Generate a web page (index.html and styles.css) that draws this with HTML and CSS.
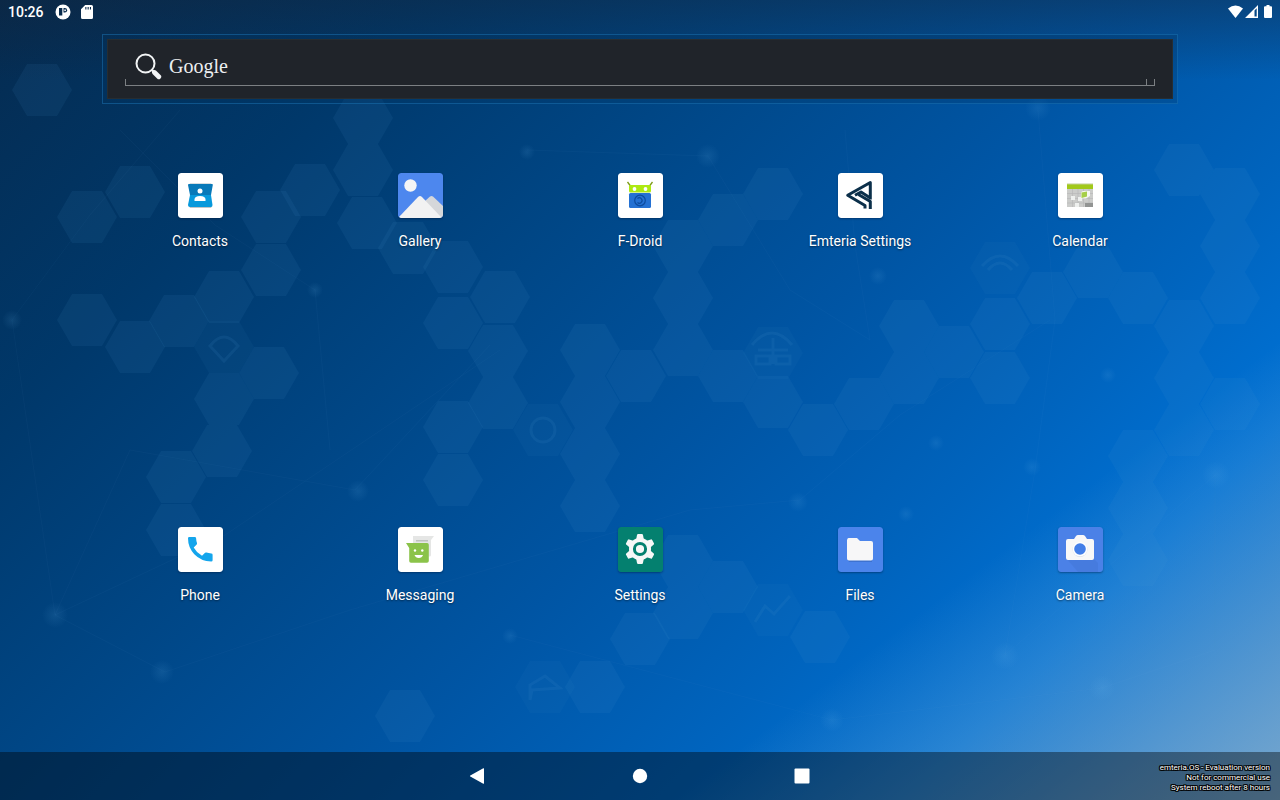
FILE: index.html
```html
<!DOCTYPE html>
<html lang="en">
<head>
<meta charset="utf-8">
<meta name="viewport" content="width=device-width, initial-scale=1">
<title>Home</title>
<link rel="stylesheet" href="styles.css">
</head>
<body>
<div class="screen">
  <svg class="wallpaper" viewBox="0 0 1280 800" preserveAspectRatio="xMidYMid slice" aria-hidden="true">
    <defs>
      <path id="hex" d="M-30 0 -15 -26H15L30 0 15 26H-15Z" stroke-linejoin="round"/>
      <radialGradient id="dot"><stop offset="0" stop-color="#6ab4e8" stop-opacity=".13"/><stop offset="1" stop-color="#6ab4e8" stop-opacity="0"/></radialGradient>
    </defs>
    <g fill="#4a96d0" fill-opacity=".09">
      <use href="#hex" x="42" y="90"/><use href="#hex" x="87" y="217"/><use href="#hex" x="135" y="192"/><use href="#hex" x="135" y="347"/>
      <use href="#hex" x="87" y="320"/><use href="#hex" x="179" y="321"/><use href="#hex" x="224" y="297"/><use href="#hex" x="271" y="270"/>
      <use href="#hex" x="271" y="217"/><use href="#hex" x="224" y="399"/><use href="#hex" x="269" y="373"/><use href="#hex" x="222" y="451"/>
      <use href="#hex" x="176" y="477"/><use href="#hex" x="176" y="530"/><use href="#hex" x="310" y="190"/><use href="#hex" x="363" y="118"/>
      <use href="#hex" x="363" y="170"/><use href="#hex" x="367" y="223"/><use href="#hex" x="408" y="248"/><use href="#hex" x="453" y="267"/>
      <use href="#hex" x="500" y="297"/><use href="#hex" x="453" y="323"/><use href="#hex" x="498" y="351"/><use href="#hex" x="498" y="403"/>
      <use href="#hex" x="453" y="427"/><use href="#hex" x="453" y="480"/><use href="#hex" x="590" y="350"/><use href="#hex" x="590" y="402"/>
      <use href="#hex" x="590" y="454"/><use href="#hex" x="590" y="506"/><use href="#hex" x="636" y="376"/><use href="#hex" x="683" y="246"/>
      <use href="#hex" x="683" y="298"/><use href="#hex" x="683" y="350"/><use href="#hex" x="728" y="376"/><use href="#hex" x="773" y="402"/>
      <use href="#hex" x="818" y="430"/><use href="#hex" x="864" y="404"/><use href="#hex" x="909" y="378"/><use href="#hex" x="909" y="326"/>
      <use href="#hex" x="954" y="352"/><use href="#hex" x="1000" y="378"/><use href="#hex" x="1000" y="324"/><use href="#hex" x="1047" y="298"/>
      <use href="#hex" x="1093" y="272"/><use href="#hex" x="1138" y="298"/><use href="#hex" x="1184" y="326"/><use href="#hex" x="1184" y="378"/>
      <use href="#hex" x="1230" y="246"/><use href="#hex" x="1230" y="298"/><use href="#hex" x="1184" y="170"/><use href="#hex" x="1230" y="194"/>
      <use href="#hex" x="1230" y="404"/><use href="#hex" x="1184" y="430"/><use href="#hex" x="1138" y="456"/><use href="#hex" x="1138" y="508"/>
      <use href="#hex" x="1138" y="560"/><use href="#hex" x="683" y="561"/><use href="#hex" x="683" y="613"/><use href="#hex" x="728" y="587"/>
      <use href="#hex" x="820" y="637"/><use href="#hex" x="640" y="639"/><use href="#hex" x="595" y="687"/><use href="#hex" x="405" y="716"/>
      <use href="#hex" x="773" y="194"/><use href="#hex" x="728" y="220"/>
    </g>
    <g fill="#4a96d0" fill-opacity=".06">
      <use href="#hex" x="773" y="353"/><use href="#hex" x="1000" y="268"/><use href="#hex" x="543" y="430"/>
      <use href="#hex" x="773" y="610"/><use href="#hex" x="545" y="687"/><use href="#hex" x="224" y="347"/>
    </g>
    <g fill="none" stroke="#4a96d0" stroke-opacity=".12" stroke-width="3">
      <path d="M752 345q20-24 40 0M756 356h14v8h-14zM776 356h14v8h-14zM773 338v26M758 350h30"/>
      <path d="M982 266q18-20 36 0M988 270q12-14 24 0"/>
      <circle cx="543" cy="430" r="12"/>
      <path d="M755 622 765 606 774 614 790 596"/>
      <path d="M530 700V685L545 676 560 688 532 690Z"/>
      <path d="M210 346q14-18 28 0l-14 15z"/>
    </g>
    <g fill="none" stroke="#73b5e6" stroke-opacity=".04">
      <path d="M12 320 55 615 130 450 355 490 490 345M12 320 90 215 180 110M55 615 225 535 500 350M55 615 165 672 350 610 690 510M527 150 708 156 790 290 870 340 855 245 845 130M690 510 800 500 900 415 1050 320M1005 655 1035 470 1055 320 1038 110M1005 655 1215 475 1215 650 1102 688 832 720 510 635M120 130 215 225 315 290 330 450"/>
    </g>
    <g fill="url(#dot)">
      <circle cx="12" cy="320" r="10"/><circle cx="55" cy="615" r="13"/><circle cx="358" cy="491" r="11"/><circle cx="162" cy="672" r="12"/><circle cx="315" cy="290" r="8"/><circle cx="527" cy="152" r="8"/><circle cx="708" cy="156" r="12"/><circle cx="1038" cy="108" r="13"/><circle cx="1108" cy="375" r="8"/><circle cx="1032" cy="467" r="9"/><circle cx="1216" cy="475" r="14"/><circle cx="1102" cy="688" r="13"/><circle cx="1005" cy="656" r="14"/><circle cx="832" cy="720" r="12"/><circle cx="936" cy="443" r="8"/><circle cx="906" cy="514" r="8"/><circle cx="798" cy="502" r="10"/><circle cx="878" cy="276" r="9"/><circle cx="510" cy="636" r="8"/>
    </g>
  </svg>

  <header class="status">
    <div class="status-group">
      <time class="clock">10:26</time>
      <svg class="status-app" viewBox="0 0 16 16" width="16" height="16" aria-hidden="true"><circle cx="8" cy="8" r="7.500" fill="#fff"/><path d="M4 4h3.300v7.500H4Z" fill="#082b4c"/><path d="M8.500 4h1.300a2.300 2.300 0 0 1 0 4.600H8.500Z" fill="#082b4c"/><rect x="9.300" y="5.500" width="1.600" height="1.600" fill="#fff"/></svg>
      <svg viewBox="0 0 12 14" width="12" height="14" aria-hidden="true"><path fill="#fff" fill-rule="evenodd" d="M4.2 0H10.5Q12 0 12 1.500V12.500Q12 14 10.500 14H1.500Q0 14 0 12.500V4.200ZM4.300 2V4.500H5.400V2ZM6.600 2V4.500H7.700V2ZM8.900 2V4.500H10V2Z"/></svg>
    </div>
    <div class="status-group status-right">
      <svg viewBox="0 0 15 13" width="15" height="13" role="img" aria-label="Wi-Fi"><path fill="#fff" d="M7.500 13 0 3.500Q7.500-2.500 15 3.500Z"/></svg>
      <svg class="signal" viewBox="0 0 13 13" width="13" height="13" role="img" aria-label="Signal"><path fill="#fff" fill-rule="evenodd" d="M0 13 13 0V13ZM9.500 5.500V11.500H11.700V3.200Z"/></svg>
      <svg viewBox="0 0 8 13" width="8" height="13" role="img" aria-label="Battery"><path fill="#fff" d="M2.500 0h3v1.300H7q1 0 1 1V12q0 1-1 1H1q-1 0-1-1V2.300q0-1 1-1h1.500Z"/></svg>
    </div>
  </header>

  <form class="search" role="search">
    <div class="search-box">
      <label class="search-field">
        <svg viewBox="0 0 28 28" width="28" height="28" role="img" aria-label="Search"><circle cx="11.500" cy="11.500" r="9" fill="none" stroke="#f2f4f5" stroke-width="2"/><path d="m17.500 17.500 3 3" stroke="#f2f4f5" stroke-width="2.400"/><path d="m20.500 20.500 4.300 4.300" stroke="#f2f4f5" stroke-width="4.800" stroke-linecap="round"/></svg>
        <input class="search-input" type="text" placeholder="Google">
      </label>
    </div>
  </form>

  <main class="apps">
    <a class="app" href="#contacts">
      <svg class="app-icon" viewBox="0 0 45 45" aria-hidden="true"><rect width="45" height="45" rx="3" fill="#fff"/><path d="M11 33h23l-1 2H12z" fill="#bfc5c8"/><path d="M12 10h21l1 2H11z" fill="#d5dde0"/><path d="M11 11h23q1 0 .8 1L33 22H12L10 12q0-1 1-1Z" fill="#0879b9"/><path d="M12 22h21l1.500 10q0 2-1.500 2H12q-2 0-2-2Z" fill="#0799dc"/><circle cx="22" cy="18" r="2.500" fill="#fff"/><path d="M16.500 28v-1.500q0-3.500 5.500-3.500t5.500 3.500V28Z" fill="#fff"/></svg>
      <span class="app-name">Contacts</span>
    </a>
    <a class="app" href="#gallery">
      <svg class="app-icon" viewBox="0 0 45 45" aria-hidden="true"><rect width="45" height="45" rx="3" fill="#4d87ee"/><circle cx="12.500" cy="12.500" r="6.200" fill="#f5f5f5"/><path d="m27 28 5-4.500q1.500-1 3 0L45 33v9q0 3-3 3h-4Z" fill="#d5d7da"/><path d="M1 44 20 24q2-2 4 0L43 44q-1 1-2 1H3q-1 0-2-1Z" fill="#f2f2f2"/></svg>
      <span class="app-name">Gallery</span>
    </a>
    <a class="app" href="#f-droid">
      <svg class="app-icon" viewBox="0 0 45 45" aria-hidden="true"><rect width="45" height="45" rx="3" fill="#fff"/><path d="m9.500 9 3 4M34.500 9l-3 4" stroke="#7d9b18" stroke-width="1.300"/><rect x="11" y="12" width="22" height="7.500" rx="1.500" fill="#aeea12"/><circle cx="16.500" cy="16" r="1.900" fill="#fff"/><circle cx="27.500" cy="16" r="1.900" fill="#fff"/><rect x="11" y="20" width="22" height="15" rx="1.500" fill="#2471d3"/><circle cx="22" cy="27.500" r="5.300" fill="none" stroke="#0d4c9f" stroke-width="1.200"/><path d="M19.500 25.500a2.700 2.700 0 1 1 0 4" fill="none" stroke="#0d4c9f" stroke-width="1.200"/></svg>
      <span class="app-name">F-Droid</span>
    </a>
    <a class="app" href="#emteria-settings">
      <svg class="app-icon" viewBox="0 0 45 45" aria-hidden="true"><rect width="45" height="45" rx="3" fill="#fff"/><g fill="none" stroke="#0b2f4a" stroke-width="3" stroke-linejoin="round"><path d="M32.300 26.500V9.500L9.700 22.300 27 32.500v3"/><path d="m32.300 36v-7.500L20.500 21.500"/><path d="m17 22.300 6-3.300 9.300 6"/></g></svg>
      <span class="app-name">Emteria Settings</span>
    </a>
    <a class="app" href="#calendar">
      <svg class="app-icon" viewBox="0 0 45 45" aria-hidden="true"><rect width="45" height="45" rx="3" fill="#fff"/><path d="M9 15h26v19H9Z" fill="#cbccca"/><path d="M9 11h26v5H9Z" fill="#a2c91a"/><path d="M9 10.500h26v1H9Z" fill="#c2cf96"/><path d="M9 20.500h26M9 25.500h26M9 30h26M14.500 16v18M20 16v18M25.500 16v18M31 16v18" stroke="#b6b6b6" stroke-width=".6"/><path d="M13 23h4v4h-4ZM20 24h4v4h-4ZM17 30h4v4h-4Z" fill="#eef0ee"/><path d="M23 20.500q0-2.500 2.500-2.500H32v5l-4 2.500h-5Z" fill="#f5f7f0"/><path d="M23.500 19.500 29 18.500v5l-5.500 1.500Z" fill="#a6cf48"/><path d="M27 30h8v4h-8Z" fill="#929493"/></svg>
      <span class="app-name">Calendar</span>
    </a>
    <a class="app" href="#phone">
      <svg class="app-icon" viewBox="0 0 45 45" aria-hidden="true"><rect width="45" height="45" rx="3" fill="#fff"/><path d="M11.300 10h5.500q1.200 0 1.300 1.200.1 2.500.9 4.700.3.900-.3 1.500l-3 3q2.700 5 8.300 8.400l2.800-2.900q.7-.6 1.600-.3 2.200.7 4.900.9 1.300.1 1.300 1.300v5.400q0 1.300-1.400 1.300Q23 34.200 16.300 27.200 10 20.500 10 11.300q0-1.300 1.300-1.300Z" fill="#14a5ec"/></svg>
      <span class="app-name">Phone</span>
    </a>
    <a class="app" href="#messaging">
      <svg class="app-icon" viewBox="0 0 45 45" aria-hidden="true"><rect width="45" height="45" rx="3" fill="#fff"/><path d="M15 9h21l-3 4v15q0 1.500-1.500 1.500H16.500Q15 29.500 15 28Z" fill="#e5e6e5"/><path d="M18 13h12v1.500H18ZM18 16.500h12v1.300H18Z" fill="#bfc2bf"/><path d="M8 16h21q1.800 0 1.800 1.800V34q0 1.800-1.800 1.800H13q-1.800 0-1.800-1.800V21Z" fill="#8bc34a"/><circle cx="17" cy="23.500" r="1.200" fill="#fff"/><circle cx="24.300" cy="23.500" r="1.200" fill="#fff"/><path d="M16.500 28h8.500q-1 3-4.200 3t-4.300-3Z" fill="#fff"/></svg>
      <span class="app-name">Messaging</span>
    </a>
    <a class="app" href="#settings">
      <svg class="app-icon" viewBox="0 0 45 45" aria-hidden="true"><rect width="45" height="45" rx="3" fill="#04806f"/><g transform="translate(22 22)" fill="#f7f7f7"><circle r="11"/><path id="tooth" d="M-4-9-2.900-14.200Q-2.700-15-1.900-15h3.800q.8 0 1 .8L4-9Z"/><use href="#tooth" transform="rotate(60)"/><use href="#tooth" transform="rotate(120)"/><use href="#tooth" transform="rotate(180)"/><use href="#tooth" transform="rotate(240)"/><use href="#tooth" transform="rotate(300)"/><circle r="5.600" fill="none" stroke="#04806f" stroke-width="3"/></g></svg>
      <span class="app-name">Settings</span>
    </a>
    <a class="app" href="#files">
      <svg class="app-icon" viewBox="0 0 45 45" aria-hidden="true"><rect width="45" height="45" rx="3" fill="#4b84eb"/><path d="M10 33h24v2H11Z" fill="#386bc5" opacity=".7"/><path d="M10.500 11H19l3 3h11q2 0 2 2v15.500q0 2-2 2H11q-2 0-2-2v-18Q9 11 10.500 11Z" fill="#f7f7f8"/></svg>
      <span class="app-name">Files</span>
    </a>
    <a class="app" href="#camera">
      <svg class="app-icon" viewBox="0 0 45 45" aria-hidden="true"><rect width="45" height="45" rx="3" fill="#4b81e7"/><path d="M9 32h27l4 4v9H20Z" fill="#315dad" opacity=".15"/><path d="m16 12 2-3q.8-1 2-1h5q1.200 0 2 1l2 3h5q2 0 2 2v17q0 2-2 2H10q-2 0-2-2V14q0-2 2-2Z" fill="#f8f8f8"/><circle cx="22" cy="22.500" r="7.500" fill="#dce2ec"/><circle cx="22" cy="22" r="7.300" fill="#fff"/><circle cx="22" cy="22" r="5.800" fill="#447fe8"/></svg>
      <span class="app-name">Camera</span>
    </a>
  </main>

  <nav class="navbar" aria-label="System navigation">
    <button class="nav-button" type="button" aria-label="Back"><svg viewBox="0 0 16 16" width="16" height="16"><path d="M14 .7v14.600q0 .7-.7.400L.300 8.500q-.8-.5 0-1L13.300.300q.7-.3.700.4Z" fill="#fff"/></svg></button>
    <button class="nav-button" type="button" aria-label="Home"><svg viewBox="0 0 16 16" width="16" height="16"><circle cx="8" cy="8" r="7.200" fill="#fff"/></svg></button>
    <button class="nav-button" type="button" aria-label="Recent apps"><svg viewBox="0 0 16 16" width="16" height="16"><rect x=".5" y=".5" width="15" height="15" rx="1" fill="#fff"/></svg></button>
  </nav>
  <p class="notice">emteria.OS - Evaluation version<br>Not for commercial use<br>System reboot after 8 hours</p>
</div>
</body>
</html>
```

FILE: styles.css
```css
* {
  box-sizing: border-box;
}

body {
  margin: 0;
  color: #fff;
  font-family: Roboto, "Liberation Sans", sans-serif;
}

svg {
  display: block;
}

.screen {
  position: relative;
  display: flex;
  flex-direction: column;
  min-height: 100vh;
  overflow: hidden;
  background:
    linear-gradient(to bottom, rgba(20, 35, 55, 0.4), rgba(20, 35, 55, 0) 80px),
    linear-gradient(143deg, rgba(125, 170, 205, 0) 74%, rgba(125, 170, 205, 0.5) 88%, rgba(125, 170, 205, 0.95) 100%),
    linear-gradient(135deg, #052b50 0%, #00386a 20%, #004787 38%, #0055a4 55%, #0064be 70%, #0072d6 82%, #1678d4 100%);
}

.wallpaper {
  position: absolute;
  inset: 0;
  width: 100%;
  height: 100%;
}

.status,
.search,
.apps,
.navbar {
  position: relative;
}

.status {
  display: flex;
  align-items: center;
  justify-content: space-between;
  height: 24px;
  padding: 0 8px;
}

.status-group {
  display: flex;
  align-items: center;
}

.clock {
  font-size: 14px;
  font-weight: 500;
  line-height: 24px;
}

.status-app {
  margin: 0 10px 0 11px;
}

.status-right {
  align-items: flex-end;
  padding-bottom: 2px;
}

.signal {
  margin: 0 6px 0 2px;
}

.search {
  margin: 10px 102px 0;
  padding: 4px;
  border: 1px solid rgba(30, 125, 190, 0.45);
  background: rgba(0, 50, 95, 0.25);
}

.search-box {
  padding: 12px 17px 12px;
  border: 1px solid #272d31;
  background: #20242a;
}

.search-field {
  display: flex;
  gap: 7px;
  height: 34px;
  padding-left: 9px;
  background:
    linear-gradient(#7c8083, #7c8083) left bottom / 100% 1px no-repeat,
    linear-gradient(#7c8083, #7c8083) left bottom / 1px 7px no-repeat,
    linear-gradient(#7c8083, #7c8083) right bottom / 1px 7px no-repeat,
    linear-gradient(#7c8083, #7c8083) right 8px bottom / 1px 7px no-repeat;
}

.search-input {
  flex: 1;
  min-width: 0;
  height: 28px;
  padding: 0;
  border: 0;
  outline: 0;
  background: none;
  color: #eceff1;
  font-family: "Liberation Serif", serif;
  font-size: 20px;
}

.search-input::placeholder {
  color: #eceff1;
  opacity: 1;
}

.apps {
  flex: 1;
  display: grid;
  grid-template-columns: repeat(5, 1fr);
  align-content: space-between;
  row-gap: 48px;
  padding: 69px 90px 148px;
}

.app {
  display: flex;
  flex-direction: column;
  align-items: center;
  gap: 14px;
  color: #fff;
  text-decoration: none;
}

.app-icon {
  width: 45px;
  height: 45px;
  border-radius: 3px;
  box-shadow: 0 1px 2px rgba(0, 20, 50, 0.4);
}

.app-name {
  font-size: 14px;
  line-height: 18px;
  text-shadow: 0 1px 2px rgba(0, 0, 0, 0.5);
}

.navbar {
  display: flex;
  align-items: center;
  justify-content: center;
  gap: 114px;
  height: 48px;
  background: rgba(0, 0, 0, 0.4);
}

.nav-button {
  display: grid;
  place-items: center;
  width: 48px;
  height: 48px;
  padding: 0;
  border: 0;
  background: none;
}

.notice {
  position: absolute;
  right: 10px;
  bottom: 7px;
  margin: 0;
  font-size: 8px;
  line-height: 10px;
  text-align: right;
  text-shadow: -1px -1px 0 #000, 0 -1px 0 #000, 1px -1px 0 #000, -1px 0 0 #000, 1px 0 0 #000, -1px 1px 0 #000, 0 1px 0 #000, 1px 1px 0 #000;
}
```
